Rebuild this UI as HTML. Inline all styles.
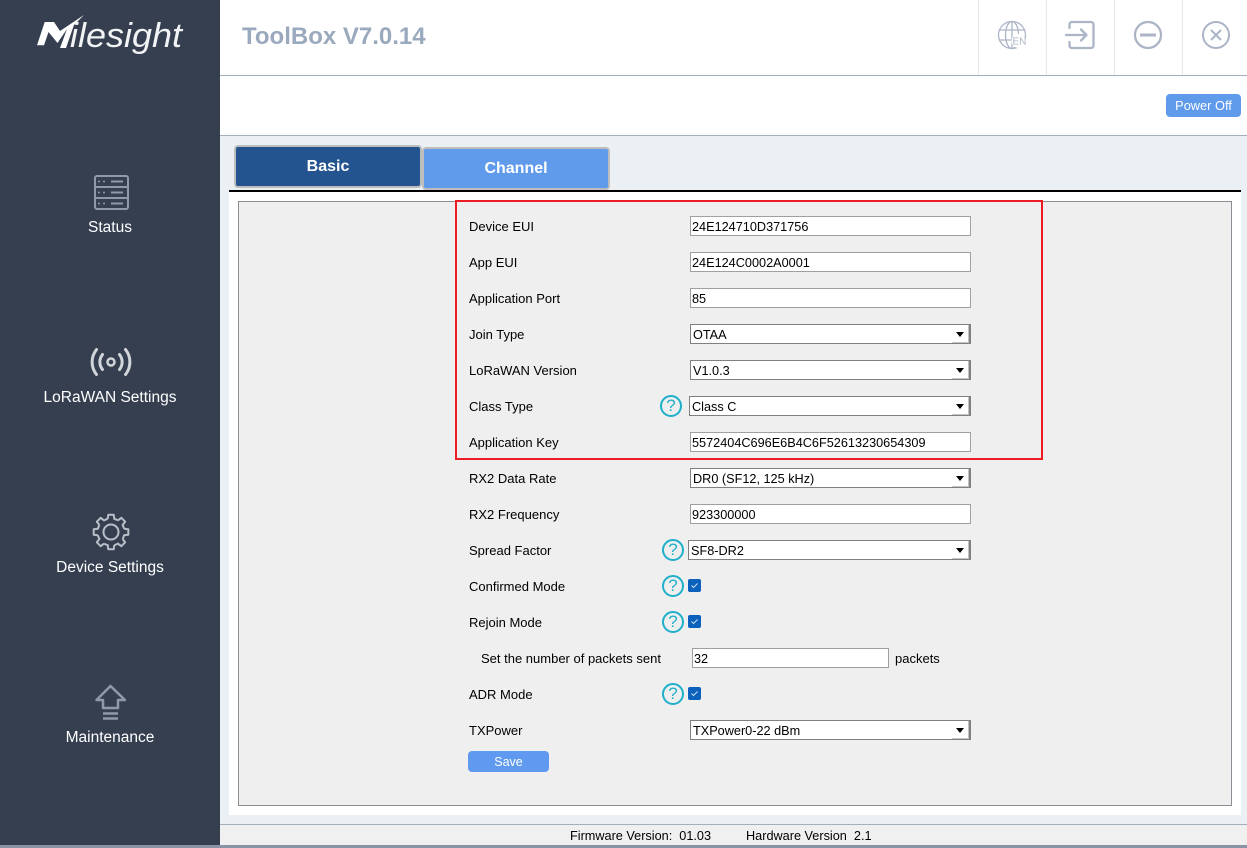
<!DOCTYPE html>
<html><head><meta charset="utf-8"><title>ToolBox</title>
<style>
html,body{margin:0;padding:0;width:1247px;height:848px;overflow:hidden;background:#fff;font-family:"Liberation Sans",Arial,sans-serif;color:#000}
div,span{position:absolute;box-sizing:border-box;white-space:nowrap}
svg{position:absolute;overflow:visible}
.side{left:0;width:220px;text-align:center;color:#fff;font-size:15.5px;line-height:22px}
.l{left:469px;font-size:13px;line-height:22px;color:#000}
.i{height:20px;background:#fff;border:1px solid #a0a0a0;font-size:12.7px;line-height:20px;padding-left:1px;color:#000}
.s{height:20px;background:#fff;border:1px solid #808080;font-size:12.7px;line-height:20px;padding-left:2px;color:#000}
.s b{position:absolute;right:0;top:0;width:17px;height:18px;border-right:1px solid #808080;border-bottom:1px solid #808080;box-shadow:inset -1px -1px 0 #c4c4c4}
.s b:after{content:"";position:absolute;left:4px;top:7px;border-left:4px solid transparent;border-right:4px solid transparent;border-top:5px solid #000}
.q{width:22px;height:22px;border:2px solid #1fb0ca;border-radius:50%;color:#1fb0ca;font-size:17px;line-height:18px;text-align:center}
.c{left:688px;width:13px;height:13px;background:#0a62bd;border-radius:2px}
.c svg{left:0;top:0}
.sep{top:0;width:1px;height:75px;background:#e6e9ec}
</style></head><body>

<div style="left:0;top:0;width:220px;height:848px;background:#353f50"></div>

<svg style="left:0;top:0" width="220" height="70" viewBox="0 0 220 70">
<polygon fill="#fff" points="37,45.300 44.700,22 54,22 60,31 84,15 74,25 66,48 60,48 67,29 57.500,43 48.500,32 44,45.300"/>
<text x="70" y="47" fill="#f2f3f5" font-family="Liberation Sans" font-style="italic" font-size="34" textLength="112" lengthAdjust="spacingAndGlyphs">ilesight</text>
</svg>

<svg style="left:0;top:170" width="220" height="45" viewBox="0 170 220 45" fill="none" stroke="#8e99aa" stroke-width="2">
<rect x="95" y="176" width="33" height="33" rx="2"/>
<path d="M95 187h33M95 198h33"/>
<path d="M111 181.500h12M111 192.500h12M111 203.500h12" stroke-width="2"/>
<path d="M98 181.500h2M103 181.500h2M98 192.500h2M103 192.500h2M98 203.500h2M103 203.500h2" stroke-width="1.500"/>
</svg>
<div class="side" style="top:217px">Status</div>

<svg style="left:85px;top:343px" width="52" height="38" viewBox="85 343 52 38" fill="none" stroke="#d2d5da" stroke-width="3" stroke-linecap="round">
<circle cx="111" cy="362" r="3.500" stroke-width="2.500"/>
<path d="M102.500 354.500a12 12 0 0 0 0 15M119.500 354.500a12 12 0 0 1 0 15"/>
<path d="M96.500 349.500a20 20 0 0 0 0 25M125.500 349.500a20 20 0 0 1 0 25"/>
</svg>
<div class="side" style="top:387px">LoRaWAN Settings</div>

<svg style="left:90px;top:511px" width="42" height="42" viewBox="-21 -21 42 42" fill="none" stroke="#b8bfc9" stroke-width="2" stroke-linejoin="round">
<path d="M-3.270 -13.100L-2.740 -17.300L2.740 -17.300L3.270 -13.100A13.500 13.500 0 0 1 6.950 -11.570"/>
<path transform="rotate(45)" d="M-3.270 -13.100L-2.740 -17.300L2.740 -17.300L3.270 -13.100A13.500 13.500 0 0 1 6.950 -11.570"/>
<path transform="rotate(90)" d="M-3.270 -13.100L-2.740 -17.300L2.740 -17.300L3.270 -13.100A13.500 13.500 0 0 1 6.950 -11.570"/>
<path transform="rotate(135)" d="M-3.270 -13.100L-2.740 -17.300L2.740 -17.300L3.270 -13.100A13.500 13.500 0 0 1 6.950 -11.570"/>
<path transform="rotate(180)" d="M-3.270 -13.100L-2.740 -17.300L2.740 -17.300L3.270 -13.100A13.500 13.500 0 0 1 6.950 -11.570"/>
<path transform="rotate(225)" d="M-3.270 -13.100L-2.740 -17.300L2.740 -17.300L3.270 -13.100A13.500 13.500 0 0 1 6.950 -11.570"/>
<path transform="rotate(270)" d="M-3.270 -13.100L-2.740 -17.300L2.740 -17.300L3.270 -13.100A13.500 13.500 0 0 1 6.950 -11.570"/>
<path transform="rotate(315)" d="M-3.270 -13.100L-2.740 -17.300L2.740 -17.300L3.270 -13.100A13.500 13.500 0 0 1 6.950 -11.570"/>
<circle r="7.500"/>
</svg>
<div class="side" style="top:557px">Device Settings</div>

<svg style="left:90px;top:680px" width="42" height="44" viewBox="90 680 42 44" fill="none" stroke="#8e99aa" stroke-width="2.500" stroke-linejoin="round">
<path d="M110.500 686L125 700H118V708H103V700H96.500Z"/>
<path d="M103 713.500H118M103 718.500H118"/>
</svg>
<div class="side" style="top:727px">Maintenance</div>

<!-- header -->
<div style="left:242px;top:23px;font-size:24px;line-height:28px;font-weight:bold;color:#9aa9bd">ToolBox V7.0.14</div>
<div class="sep" style="left:978px"></div>
<div class="sep" style="left:1046px"></div>
<div class="sep" style="left:1114px"></div>
<div class="sep" style="left:1182px"></div>

<svg style="left:990px;top:15px" width="250" height="42" viewBox="990 15 250 42" fill="none" stroke="#abb5c6" stroke-width="2.300">
<g stroke-width="1.300">
<circle cx="1012" cy="35" r="13.500"/>
<ellipse cx="1012" cy="35" rx="6.500" ry="13.500"/>
<path d="M1012 21.500v27M999.500 30h25M999.500 40h25"/>
</g>
<circle cx="1018.500" cy="41" r="7" fill="#fff" stroke="none"/>
<text x="1012.500" y="44.500" font-family="Liberation Sans" font-size="10" fill="#abb5c6" stroke="none">EN</text>
<path d="M1069.500 28v-3.500a2.500 2.500 0 0 1 2.500-2.500h19a2.500 2.500 0 0 1 2.500 2.500v21a2.500 2.500 0 0 1-2.500 2.500h-19a2.500 2.500 0 0 1-2.500-2.500V42" stroke-linecap="round"/>
<path d="M1066 35h20M1081 29.500l5.500 5.500-5.500 5.500" stroke-linecap="round" stroke-linejoin="round"/>
<circle cx="1148" cy="35" r="13"/>
<path d="M1140 35h16" stroke-width="3"/>
<circle cx="1216" cy="35" r="13" stroke-width="2"/>
<path d="M1211 30l10 10M1221 30l-10 10" stroke-width="2"/>
</svg>

<div style="left:220px;top:75px;width:1027px;height:1px;background:#a5aebc"></div>
<div style="left:1166px;top:94px;width:75px;height:23px;border-radius:4px;background:#5f9aeb;color:#fff;font-size:12.800px;line-height:24px;text-align:center">Power Off</div>
<div style="left:220px;top:135px;width:1027px;height:1px;background:#a5aebc"></div>
<div style="left:220px;top:136px;width:1027px;height:688px;background:#ebf0f4"></div>

<!-- tabs -->
<div style="left:234px;top:145px;width:188px;height:43px;background:#24548f;border:2px solid #bdbdbd;border-radius:4px;color:#fff;font-weight:bold;font-size:16px;line-height:40px;text-align:center">Basic</div>
<div style="left:422px;top:147px;width:188px;height:43px;background:#5f9aeb;border:2px solid #bdbdbd;border-radius:4px;color:#fff;font-weight:bold;font-size:16px;line-height:40px;text-align:center">Channel</div>

<div style="left:229px;top:192px;width:1012px;height:623px;background:#fff"></div>
<div style="left:229px;top:190px;width:1012px;height:2px;background:#000"></div>
<div style="left:238px;top:201px;width:994px;height:605px;background:#efefef;border:1px solid #8a8d93"></div>
<div style="left:455px;top:200px;width:588px;height:260px;border:2px solid #ed1c24"></div>

<!-- form -->
<div class="l" style="top:216px">Device EUI</div>
<div class="i" style="left:690px;top:216px;width:281px">24E124710D371756</div>
<div class="l" style="top:252px">App EUI</div>
<div class="i" style="left:690px;top:252px;width:281px">24E124C0002A0001</div>
<div class="l" style="top:288px">Application Port</div>
<div class="i" style="left:690px;top:288px;width:281px">85</div>
<div class="l" style="top:324px">Join Type</div>
<div class="s" style="left:690px;top:324px;width:281px">OTAA<b></b></div>
<div class="l" style="top:360px">LoRaWAN Version</div>
<div class="s" style="left:690px;top:360px;width:281px">V1.0.3<b></b></div>
<div class="l" style="top:396px">Class Type</div>
<div class="q" style="left:660px;top:395px">?</div>
<div class="s" style="left:689px;top:396px;width:282px">Class C<b></b></div>
<div class="l" style="top:432px">Application Key</div>
<div class="i" style="left:690px;top:432px;width:281px">5572404C696E6B4C6F52613230654309</div>
<div class="l" style="top:468px">RX2 Data Rate</div>
<div class="s" style="left:690px;top:468px;width:281px">DR0 (SF12, 125 kHz)<b></b></div>
<div class="l" style="top:504px">RX2 Frequency</div>
<div class="i" style="left:690px;top:504px;width:281px">923300000</div>
<div class="l" style="top:540px">Spread Factor</div>
<div class="q" style="left:662px;top:539px">?</div>
<div class="s" style="left:688px;top:540px;width:283px">SF8-DR2<b></b></div>
<div class="l" style="top:576px">Confirmed Mode</div>
<div class="q" style="left:662px;top:575px">?</div>
<div class="c" style="top:579px"><svg width="13" height="13" fill="none" stroke="#cfe0f5" stroke-width="1"><path d="M3.500 6.500l2 2 4-4"/></svg></div>
<div class="l" style="top:612px">Rejoin Mode</div>
<div class="q" style="left:662px;top:611px">?</div>
<div class="c" style="top:615px"><svg width="13" height="13" fill="none" stroke="#cfe0f5" stroke-width="1"><path d="M3.500 6.500l2 2 4-4"/></svg></div>
<div class="l" style="left:481px;top:648px">Set the number of packets sent</div>
<div class="i" style="left:692px;top:648px;width:197px">32</div>
<div class="l" style="left:895px;top:648px">packets</div>
<div class="l" style="top:684px">ADR Mode</div>
<div class="q" style="left:662px;top:683px">?</div>
<div class="c" style="top:687px"><svg width="13" height="13" fill="none" stroke="#cfe0f5" stroke-width="1"><path d="M3.500 6.500l2 2 4-4"/></svg></div>
<div class="l" style="top:720px">TXPower</div>
<div class="s" style="left:690px;top:720px;width:281px">TXPower0-22 dBm<b></b></div>
<div style="left:468px;top:751px;width:81px;height:21px;border-radius:4px;background:#609af0;color:#fff;font-size:12.500px;line-height:23px;text-align:center">Save</div>

<!-- footer -->
<div style="left:220px;top:824px;width:1027px;height:1px;background:#a5aebc"></div>
<div style="left:220px;top:825px;width:1027px;height:20px;background:#f0f0f0"></div>
<div style="left:570px;top:827px;font-size:12.700px;line-height:18px">Firmware Version:&nbsp; 01.03</div>
<div style="left:746px;top:827px;font-size:12.700px;line-height:18px">Hardware Version&nbsp; 2.1</div>
<div style="left:0;top:845px;width:1247px;height:3px;background:#8a93a3"></div>

</body></html>
